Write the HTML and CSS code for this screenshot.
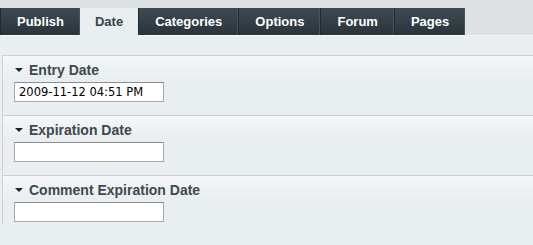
FILE: index.html
```html
<!DOCTYPE html>
<html lang="en">
<head>
    <meta charset="UTF-8">
    <title>Post Settings</title>
    <link rel="stylesheet" href="styles.css">
</head>
<body>
    <div class="tab-bar">
        <a class="tab">Publish</a>
        <a class="tab active">Date</a>
        <a class="tab">Categories</a>
        <a class="tab">Options</a>
        <a class="tab">Forum</a>
        <a class="tab">Pages</a>
    </div>

    <div class="content">
        <div class="panel">
            <div class="field-group">
                <h3 class="field-title"><span class="arrow"></span>Entry Date</h3>
                <input type="text" class="date-input" value="2009-11-12 04:51 PM">
            </div>
            <div class="field-group">
                <h3 class="field-title"><span class="arrow"></span>Expiration Date</h3>
                <input type="text" class="date-input" value="">
            </div>
            <div class="field-group">
                <h3 class="field-title"><span class="arrow"></span>Comment Expiration Date</h3>
                <input type="text" class="date-input" value="">
            </div>
        </div>
    </div>
</body>
</html>
```

FILE: styles.css
```css
* { margin: 0; padding: 0; box-sizing: border-box; }

body {
    font-family: 'Liberation Sans', Arial, sans-serif;
    background-color: #e9eef1;
    height: 245px;
    overflow: hidden;
}

/* --- tabs --- */
.tab-bar {
    display: flex;
    align-items: flex-end;
    height: 36px;
    padding-top: 8px;
    background-color: #dde1e3;
    border-bottom: 1px solid #f6f8f9;
}
.tab {
    height: 27px;
    line-height: 27px;
    padding: 0 15px 0 16px;
    font-size: 13px;
    font-weight: bold;
    color: #fff;
    background: linear-gradient(#3e4b53, #2a3439);
    border-right: 1px solid #47535a;
    border-left: 1px solid #222a2e;
    cursor: pointer;
}
.tab.active {
    height: 28px;
    margin-bottom: -1px;
    padding: 0 15px;
    color: #3b4247;
    background: #e9eef1;
    border: none;
}

/* --- panel --- */
.content { padding-top: 19px; }
.panel {
    margin-left: 2px;
    border-left: 1px solid #cdd3d7;
}
.field-group {
    padding: 5px 0 13px 11px;
    border-top: 1px solid #c9cfd3;
    background: linear-gradient(#f5f7f9, #e9eef1 22px);
}
.field-group:last-child { padding-bottom: 3px; }
.field-title {
    display: flex;
    align-items: center;
    height: 17px;
    margin-bottom: 4px;
    font-size: 14px;
    font-weight: bold;
    color: #41484d;
}
.arrow {
    width: 0; height: 0;
    margin: 0 6px 0 1px;
    border-left: 4px solid transparent;
    border-right: 4px solid transparent;
    border-top: 4px solid #1e2326;
}
.date-input {
    display: block;
    width: 150px;
    height: 20px;
    padding: 0 4px;
    font-family: 'DejaVu Sans', sans-serif;
    font-size: 11.5px;
    color: #000;
    background: #fff;
    border: 1px solid #a7aaac;
    border-top-color: #8c8f91;
}
```
